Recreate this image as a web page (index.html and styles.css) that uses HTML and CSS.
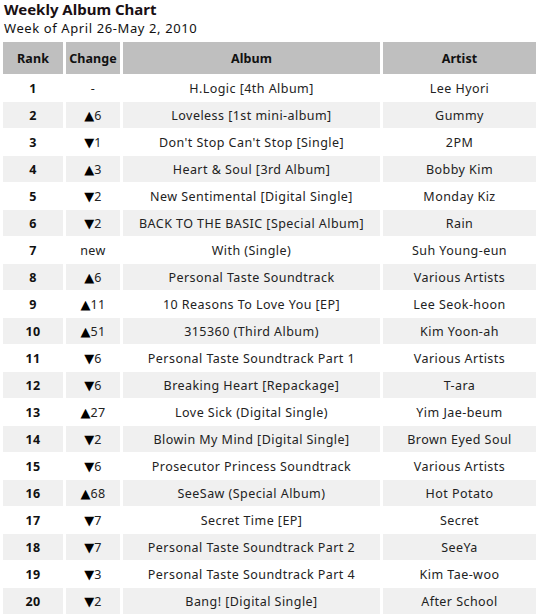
FILE: index.html
```html
<!DOCTYPE html>
<html>
<head>
<meta charset="utf-8">
<link rel="stylesheet" href="styles.css">
</head>
<body>
<div class="heading">
  <div class="title">Weekly Album Chart</div>
  <div class="subtitle">Week of April 26-May 2, 2010</div>
</div>
<table class="chart">
  <colgroup>
    <col class="c-rank"><col class="c-change"><col class="c-album"><col class="c-artist">
  </colgroup>
  <thead>
    <tr><th>Rank</th><th>Change</th><th>Album</th><th>Artist</th></tr>
  </thead>
  <tbody>
    <tr><td class="rank">1</td><td>-</td><td>H.Logic [4th Album]</td><td>Lee Hyori</td></tr>
    <tr><td class="rank">2</td><td><span class="tri">▲</span>6</td><td>Loveless [1st mini-album]</td><td>Gummy</td></tr>
    <tr><td class="rank">3</td><td><span class="tri">▼</span>1</td><td>Don't Stop Can't Stop [Single]</td><td>2PM</td></tr>
    <tr><td class="rank">4</td><td><span class="tri">▲</span>3</td><td>Heart &amp; Soul [3rd Album]</td><td>Bobby Kim</td></tr>
    <tr><td class="rank">5</td><td><span class="tri">▼</span>2</td><td>New Sentimental [Digital Single]</td><td>Monday Kiz</td></tr>
    <tr><td class="rank">6</td><td><span class="tri">▼</span>2</td><td>BACK TO THE BASIC [Special Album]</td><td>Rain</td></tr>
    <tr><td class="rank">7</td><td>new</td><td>With (Single)</td><td>Suh Young-eun</td></tr>
    <tr><td class="rank">8</td><td><span class="tri">▲</span>6</td><td>Personal Taste Soundtrack</td><td>Various Artists</td></tr>
    <tr><td class="rank">9</td><td><span class="tri">▲</span>11</td><td>10 Reasons To Love You [EP]</td><td>Lee Seok-hoon</td></tr>
    <tr><td class="rank">10</td><td><span class="tri">▲</span>51</td><td>315360 (Third Album)</td><td>Kim Yoon-ah</td></tr>
    <tr><td class="rank">11</td><td><span class="tri">▼</span>6</td><td>Personal Taste Soundtrack Part 1</td><td>Various Artists</td></tr>
    <tr><td class="rank">12</td><td><span class="tri">▼</span>6</td><td>Breaking Heart [Repackage]</td><td>T-ara</td></tr>
    <tr><td class="rank">13</td><td><span class="tri">▲</span>27</td><td>Love Sick (Digital Single)</td><td>Yim Jae-beum</td></tr>
    <tr><td class="rank">14</td><td><span class="tri">▼</span>2</td><td>Blowin My Mind [Digital Single]</td><td>Brown Eyed Soul</td></tr>
    <tr><td class="rank">15</td><td><span class="tri">▼</span>6</td><td>Prosecutor Princess Soundtrack</td><td>Various Artists</td></tr>
    <tr><td class="rank">16</td><td><span class="tri">▲</span>68</td><td>SeeSaw (Special Album)</td><td>Hot Potato</td></tr>
    <tr><td class="rank">17</td><td><span class="tri">▼</span>7</td><td>Secret Time [EP]</td><td>Secret</td></tr>
    <tr><td class="rank">18</td><td><span class="tri">▼</span>7</td><td>Personal Taste Soundtrack Part 2</td><td>SeeYa</td></tr>
    <tr><td class="rank">19</td><td><span class="tri">▼</span>3</td><td>Personal Taste Soundtrack Part 4</td><td>Kim Tae-woo</td></tr>
    <tr><td class="rank">20</td><td><span class="tri">▼</span>2</td><td>Bang! [Digital Single]</td><td>After School</td></tr>
  </tbody>
</table>
</body>
</html>
```
FILE: styles.css
```css
html, body {
  margin: 0;
  padding: 0;
  background: #ffffff;
  overflow: hidden;
}
body {
  font-family: "Noto Sans", "Noto Sans CJK KR", sans-serif;
  color: #111111;
}
.heading {
  padding: 0 0 0 4px;
  height: 39px;
}
.title {
  font-size: 15px;
  font-weight: bold;
  line-height: 19px;
  letter-spacing: 0;
  color: #1a1014;
}
.subtitle {
  font-size: 13px;
  line-height: 19px;
  letter-spacing: 0.6px;
  color: #111111;
}
.chart {
  border-collapse: separate;
  border-spacing: 3px 1px;
  margin-top: 2px;
  table-layout: fixed;
  width: 539px;
  font-size: 12.5px;
  letter-spacing: 0.45px;
}
.c-rank { width: 60px; }
.c-change { width: 54px; }
.c-album { width: 257px; }
.c-artist { width: 153px; }
.chart th {
  background: #bfbfbf;
  height: 32px;
  padding: 0;
  font-weight: bold;
  font-size: 12.5px;
  letter-spacing: 0.1px;
  color: #111111;
}
.chart td {
  height: 26px;
  padding: 0;
  text-align: center;
  white-space: nowrap;
  color: #222222;
}
.chart tbody tr:nth-child(even) td {
  background: #f0f0f0;
}
.chart td.rank {
  font-weight: bold;
  color: #111111;
}
.tri {
  font-family: "DejaVu Sans", sans-serif;
  font-size: 13px;
  letter-spacing: 0;
  color: #000000;
}
```
